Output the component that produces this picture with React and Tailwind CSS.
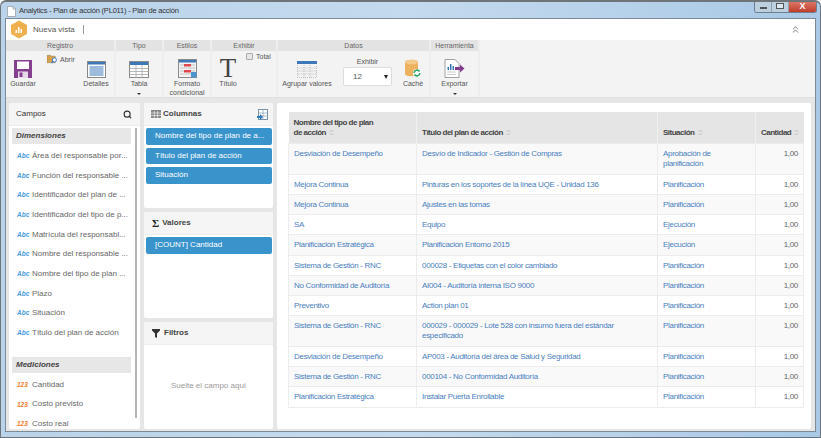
import { Search, ChevronsUp } from 'lucide-react'

const dimensiones = [
  'Área del responsable por...',
  'Función del responsable ...',
  'Identificador del plan de ...',
  'Identificador del tipo de p...',
  'Matrícula del responsabl...',
  'Nombre del responsable ...',
  'Nombre del tipo de plan ...',
  'Plazo',
  'Situación',
  'Título del plan de acción',
]

const mediciones = ['Cantidad', 'Costo previsto', 'Costo real']

const filas = [
  { tipo: 'Desviación de Desempeño', titulo: 'Desvío de Indicador - Gestión de Compras', situacion: 'Aprobación de planificación', h: 'h-[31px]' },
  { tipo: 'Mejora Continua', titulo: 'Pinturas en los soportes de la línea UQE - Unidad 136', situacion: 'Planificación', h: 'h-[20px]' },
  { tipo: 'Mejora Continua', titulo: 'Ajustes en las tomas', situacion: 'Planificación', h: 'h-[20px]' },
  { tipo: 'SA', titulo: 'Equipo', situacion: 'Ejecución', h: 'h-[20px]' },
  { tipo: 'Planificación Estratégica', titulo: 'Planificación Entorno 2015', situacion: 'Ejecución', h: 'h-[21px]' },
  { tipo: 'Sistema de Gestión - RNC', titulo: '000028 - Etiquetas con el color cambiado', situacion: 'Planificación', h: 'h-[20px]' },
  { tipo: 'No Conformidad de Auditoría', titulo: 'AI004 - Auditoría interna ISO 9000', situacion: 'Planificación', h: 'h-[20px]' },
  { tipo: 'Preventivo', titulo: 'Action plan 01', situacion: 'Planificación', h: 'h-[20px]' },
  { tipo: 'Sistema de Gestión - RNC', titulo: '000029 - 000029 - Lote 528 con insumo fuera del estándar especificado', situacion: 'Planificación', h: 'h-[31px]' },
  { tipo: 'Desviación de Desempeño', titulo: 'AP003 - Auditoría del área de Salud y Seguridad', situacion: 'Planificación', h: 'h-[20px]' },
  { tipo: 'Sistema de Gestión - RNC', titulo: '000104 - No Conformidad Auditoría', situacion: 'Planificación', h: 'h-[20px]' },
  { tipo: 'Planificación Estratégica', titulo: 'Instalar Puerta Enrollable', situacion: 'Planificación', h: 'h-[21px]' },
]

function SortIcon() {
  return (
    <svg width="5" height="7" viewBox="0 0 5 7" className="inline-block ml-[3px]">
      <path d="M0.5 3 L2.5 1 L4.5 3 M0.5 4 L2.5 6 L4.5 4" fill="none" stroke="#b5b5b5" strokeWidth="0.7" />
    </svg>
  )
}

function TableIcon() {
  return (
    <svg width="20" height="17" viewBox="0 0 20 17">
      <rect x="0.5" y="0.5" width="19" height="16" fill="#fff" stroke="#8a8a8a" />
      <rect x="1" y="1" width="18" height="3" fill="#3d78b8" />
      <path d="M1 7.5h18M1 10.5h18M1 13.5h18M7 4v13M13 4v13" stroke="#a8a8a8" strokeWidth="0.8" />
    </svg>
  )
}

function Grupo({ titulo, className, children }) {
  return (
    <div className={`flex flex-col shrink-0 border-r-2 border-[#ededed] ${className}`}>
      <div className="h-[11px] bg-[#e3e3e3] text-[7px] leading-[11px] text-[#666] text-center">{titulo}</div>
      <div className="flex-1 relative">{children}</div>
    </div>
  )
}

function Boton({ icono, children, className }) {
  return (
    <div className={`flex flex-col items-center text-[7px] leading-[9px] text-[#555] text-center ${className}`}>
      <div className="h-[19px] flex items-end justify-center">{icono}</div>
      <div className="mt-[1px]">{children}</div>
    </div>
  )
}

function Caret() {
  return <div className="absolute bottom-[2px] left-1/2 -translate-x-1/2 w-0 h-0 border-x-[2px] border-x-transparent border-t-[2px] border-t-[#333]" />
}

function Chip({ children }) {
  return (
    <div className="h-[16.5px] rounded-[2px] bg-[#3a94cc] text-white text-[8px] leading-[16px] pl-[9px] whitespace-nowrap overflow-hidden">
      {children}
    </div>
  )
}

function PanelHeader({ children, className }) {
  return <div className={`shrink-0 bg-[#f5f5f5] border-b border-[#ececec] flex items-center text-[8px] font-bold text-[#444] ${className}`}>{children}</div>
}

export default function App() {
  return (
    <div className="w-[821px] h-[438px] overflow-hidden flex flex-col rounded-t-[6px] border-t-2 border-x border-b border-[#6e7478] bg-gradient-to-r from-[#b9d3ea] via-[#c4daee] to-[#a9c9e6] font-['Liberation_Sans',sans-serif]">
      {/* barra de titulo */}
      <div className="h-[16px] shrink-0 flex pl-[5px] pr-[3px]">
        <div className="flex items-center text-[7.5px] tracking-[-0.2px] text-[#333] pl-[1px] pt-[2px]">
          <svg width="9" height="11" viewBox="0 0 9 11">
            <path d="M0.5 0.5h5.5l2.5 2.5v7.5h-8z" fill="#fff" stroke="#9aa0a6" strokeWidth="0.8" />
            <path d="M6 0.5v2.5h2.5" fill="none" stroke="#9aa0a6" strokeWidth="0.8" />
          </svg>
          <span className="ml-[3px]">Analytics - Plan de acción (PL011) - Plan de acción</span>
        </div>
        <div className="ml-auto flex h-[13px] -mt-[2px] rounded-b-[3px] border border-t-0 border-[#6e7f8e] overflow-hidden">
          <div className="w-[17px] bg-[#bdd0e0] flex items-center justify-center border-r border-[#8fa0ae]">
            <div className="w-[7px] h-[2px] bg-white border border-[#555] mt-[4px]" />
          </div>
          <div className="w-[17px] bg-[#bdd0e0] flex items-center justify-center border-r border-[#8fa0ae]">
            <div className="w-[8px] h-[6px] border border-[#555] bg-[#dde7ef]" />
          </div>
          <div className="w-[27px] bg-gradient-to-b from-[#dd8070] to-[#c23a2a] flex items-center justify-center text-white text-[9px] font-bold leading-none">
            X
          </div>
        </div>
      </div>

      {/* cuerpo de la ventana */}
      <div className="flex-1 min-h-0 mx-[4px] mb-[5px] border border-[#7b8a96] bg-[#e6e6e6] flex flex-col overflow-hidden">
        <div className="h-[21px] shrink-0 bg-white flex items-center pl-[4px] pr-[14px]">
          <svg width="18" height="19" viewBox="0 0 18 19">
            <path d="M9 0.5L17 5v9l-8 4.5L1 14V5z" fill="#efb04f" />
            <path d="M5.5 13V10h1.5v3zM8 13V7h1.5v6zM10.5 13V9H12v4z" fill="#fff" />
          </svg>
          <span className="ml-[5px] text-[8px] text-[#555]">Nueva vista</span>
          <div className="ml-[8px] w-px h-[9px] bg-[#999]" />
          <ChevronsUp size={11} strokeWidth={1.5} className="ml-auto text-[#444]" />
        </div>

        {/* cinta */}
        <div className="h-[58px] shrink-0 bg-[#f3f3f3] flex border-b border-[#e0e0e0]">
          <Grupo titulo="Registro" className="w-[110px]">
            <Boton className="absolute left-[3px] top-[8px] w-[28px]" icono={
              <svg width="18" height="18" viewBox="0 0 18 18">
                <path d="M0 0h18v18H0z" fill="#84408f" />
                <rect x="3" y="1.5" width="12" height="7.5" fill="#fff" />
                <rect x="4" y="11.5" width="10" height="6.5" fill="#e6d9e8" />
                <rect x="5.5" y="12.5" width="3" height="4.5" fill="#84408f" />
              </svg>
            }>Guardar</Boton>
            <div className="absolute left-[41px] top-[3px] flex items-center gap-[2px] text-[7px] text-[#555] leading-none">
              <svg width="11" height="10" viewBox="0 0 12 10">
                <path d="M0 1h4l1 1h4v7H0z" fill="#d8a24a" stroke="#8b7a5a" strokeWidth="0.5" />
                <circle cx="8" cy="6" r="2.3" fill="#fff" stroke="#2f78c0" />
                <path d="M6.5 7.5L5 9.5" stroke="#2f78c0" strokeWidth="1.2" />
              </svg>
              Abrir
            </div>
            <Boton className="absolute left-[76px] top-[8px] w-[28px]" icono={
              <svg width="19" height="17" viewBox="0 0 19 17">
                <rect x="0.5" y="0.5" width="18" height="16" fill="#fff" stroke="#888" />
                <rect x="1" y="1" width="17" height="2.5" fill="#3d78b8" />
                <rect x="2.5" y="5" width="14" height="10" fill="#9dbbdc" />
              </svg>
            }>Detalles</Boton>
          </Grupo>
          <Grupo titulo="Tipo" className="w-[48px]">
            <Boton className="pt-[8px]" icono={<TableIcon />}>Tabla</Boton>
            <Caret />
          </Grupo>
          <Grupo titulo="Estilos" className="w-[48px]">
            <Boton className="pt-[8px]" icono={
              <svg width="19" height="19" viewBox="0 0 19 19">
                <rect x="0.5" y="0.5" width="18" height="18" fill="#f4f4f4" stroke="#8a8a8a" />
                <rect x="1" y="1" width="17" height="2.5" fill="#3d78b8" />
                <path d="M2 6h15M2 9h15M2 12h15M2 15h15" stroke="#b8b8b8" strokeWidth="0.8" />
                <rect x="6" y="5" width="7" height="2.5" fill="#e0474c" />
                <rect x="6" y="11" width="7" height="2.5" fill="#e0474c" />
                <rect x="13" y="13" width="5.5" height="5.5" fill="#4d94d0" />
              </svg>
            }>Formato<br />condicional</Boton>
          </Grupo>
          <Grupo titulo="Exhibir" className="w-[66px]">
            <div className="absolute left-[-5px] top-[8px] w-[42px] flex flex-col items-center text-[7px] leading-[9px] text-[#555]">
              <span className="h-[19px] text-[27px] leading-[19px] text-[#444] font-['Liberation_Serif',serif]">T</span>
              <span className="mt-[1px]">Título</span>
            </div>
            <div className="absolute left-[34px] top-[2px] flex items-center gap-[3px] text-[7px] text-[#555] leading-none">
              <div className="w-[7px] h-[7px] rounded-[1px] border border-[#aaa] bg-[#e8e8e8]" />
              Total
            </div>
          </Grupo>
          <Grupo titulo="Datos" className="w-[153px]">
            <Boton className="absolute left-[1px] top-[8px] w-[56px] whitespace-nowrap" icono={
              <svg width="20" height="17" viewBox="0 0 20 17">
                <rect x="0" y="0" width="20" height="3" fill="#3d78b8" />
                <path d="M0.5 4v12.5h19V4M0.5 7h19M0.5 10h19M0.5 13h19M7 4v13M13 4v13" fill="none" stroke="#aaa" strokeWidth="0.7" strokeDasharray="1 1" />
              </svg>
            }>Agrupar valores</Boton>
            <div className="absolute left-[65px] top-[6px] w-[49px] text-center text-[7px] leading-[10px] text-[#555]">
              Exhibir
              <div className="h-[19px] rounded-[2px] border border-[#ddd] bg-white flex items-center justify-between pl-[9px] pr-[3px] text-[8px] text-[#555]">
                12
                <div className="w-0 h-0 border-x-[2.5px] border-x-transparent border-t-[4px] border-t-[#222]" />
              </div>
            </div>
            <Boton className="absolute left-[123px] top-[8px] w-[24px]" icono={
              <svg width="18" height="19" viewBox="0 0 18 19">
                <path d="M1 3c0-3 13-3 13 0v12c0 3-13 3-13 0z" fill="#edb260" />
                <ellipse cx="7.5" cy="3" rx="6.5" ry="2.3" fill="#f4ca8c" />
                <circle cx="13" cy="14" r="4" fill="#fff" />
                <path d="M10 14a3 3 0 0 1 5.5-1.5M16 14a3 3 0 0 1-5.5 1.5" fill="none" stroke="#2aa36b" strokeWidth="1.5" />
              </svg>
            }>Caché</Boton>
          </Grupo>
          <Grupo titulo="Herramienta" className="w-[49px]">
            <Boton className="pt-[8px]" icono={
              <svg width="21" height="19" viewBox="0 0 21 19">
                <path d="M1 0.5h10l4 4v14H1z" fill="#fff" stroke="#8a8a8a" strokeWidth="0.8" />
                <path d="M3.5 11V8H5v3zM6 11V5h1.5v6zM8.5 11V7H10v4z" fill="#3d78b8" />
                <path d="M3 13h9M3 15.5h9" stroke="#bbb" strokeWidth="0.8" />
                <path d="M11 8h5V5.5l4.5 4-4.5 4V11h-5z" fill="#84408f" />
              </svg>
            }>Exportar</Boton>
            <Caret />
          </Grupo>
        </div>

        {/* paneles */}
        <div className="flex-1 min-h-0 flex gap-[4px] pl-[3px] pr-[4px] pt-[5px] pb-[2px]">
          <div className="w-[131px] shrink-0 bg-white rounded-[2px] flex flex-col overflow-hidden relative">
            <PanelHeader className="h-[23px] pl-[7px] pr-[8px] justify-between">
              <span className="font-normal text-[#333]">Campos</span>
              <Search size={9} strokeWidth={3} className="text-[#333]" />
            </PanelHeader>
            <div className="pl-[3px] pr-[9px] pt-[2px] min-h-0 overflow-hidden">
              <div className="h-[16px] bg-[#e7e7e7] pl-[4px] text-[8px] leading-[16px] font-bold italic text-[#444]">Dimensiones</div>
              <div className="h-[2px]" />
              {dimensiones.map((d) => (
                <div key={d} className="h-[19.7px] flex items-center whitespace-nowrap text-[8px] text-[#666] pl-[5px]">
                  <span className="w-[15px] shrink-0 text-[6.5px] font-bold italic text-[#4a9be0]">Abc</span>
                  {d}
                </div>
              ))}
              <div className="h-[14px]" />
              <div className="h-[16px] bg-[#e7e7e7] pl-[4px] text-[8px] leading-[16px] font-bold italic text-[#444]">Mediciones</div>
              <div className="h-[2px]" />
              {mediciones.map((m) => (
                <div key={m} className="h-[19.7px] flex items-center whitespace-nowrap text-[8px] text-[#666] pl-[5px]">
                  <span className="w-[15px] shrink-0 text-[6.5px] font-bold italic text-[#f07a2a]">123</span>
                  {m}
                </div>
              ))}
            </div>
            <div className="absolute right-[3px] top-[25px] bottom-[11px] w-[2px] bg-[#b5b5b5]" />
          </div>

          <div className="w-[129px] shrink-0 flex flex-col gap-[4px]">
            <div className="h-[105px] bg-white rounded-[2px] overflow-hidden">
              <PanelHeader className="h-[23px] pl-[7px] pr-[5px] mb-[2px]">
                <svg width="10" height="8" viewBox="0 0 10 8" className="mr-[2px]">
                  <rect x="0" y="0" width="10" height="8" fill="#888" />
                  <path d="M0 3h10M0 5.5h10M3.3 1v7M6.6 1v7" stroke="#fff" strokeWidth="0.6" />
                </svg>
                Columnas
                <svg width="11" height="11" viewBox="0 0 11 11" className="ml-auto">
                  <rect x="1.5" y="0.5" width="9" height="10" fill="#fff" stroke="#7a94ad" />
                  <path d="M6 1v9M1.5 4h9M1.5 7h9" stroke="#7a94ad" strokeWidth="0.6" />
                  <path d="M0 7h3V5l3 3-3 3V9H0z" fill="#2f78c0" />
                </svg>
              </PanelHeader>
              <div className="flex flex-col gap-[3px] pl-[2px] pr-[1px]">
                <Chip>Nombre del tipo de plan de a...</Chip>
                <Chip>Título del plan de acción</Chip>
                <Chip>Situación</Chip>
              </div>
            </div>
            <div className="h-[106px] bg-white rounded-[2px] overflow-hidden">
              <PanelHeader className="h-[23px] pl-[8px] mb-[2px]">
                <span className="mr-[3px] text-[11px] text-[#222] font-['Liberation_Serif',serif]">Σ</span>
                Valores
              </PanelHeader>
              <div className="pl-[2px] pr-[1px]">
                <Chip>[COUNT] Cantidad</Chip>
              </div>
            </div>
            <div className="flex-1 bg-white rounded-[2px] flex flex-col overflow-hidden">
              <PanelHeader className="h-[23px] pl-[8px]">
                <svg width="8" height="9" viewBox="0 0 8 9" className="mr-[4px]">
                  <path d="M0 0h8v1.5L5 4.5V9L3 8V4.5L0 1.5z" fill="#333" />
                </svg>
                Filtros
              </PanelHeader>
              <div className="flex-1 flex items-center justify-center text-[8px] text-[#999] pb-[3px]">Suelte el campo aquí</div>
            </div>
          </div>

          <div className="flex-1 min-w-0 bg-white rounded-[2px] pl-[11px] pt-[9px]">
            <table className="w-[515px] table-fixed border-collapse text-[8px] leading-[10px]">
              <colgroup>
                <col className="w-[128px]" />
                <col className="w-[241px]" />
                <col className="w-[98px]" />
                <col className="w-[48px]" />
              </colgroup>
              <thead>
                <tr className="h-[31px] bg-[#e5e5e5] text-[#444] font-bold text-left tracking-[-0.5px]">
                  <th className="px-[5px] pb-[5px] align-bottom font-bold">Nombre del tipo de plan<br />de acción<SortIcon /></th>
                  <th className="px-[5px] pb-[5px] align-bottom font-bold border-l border-[#f0f0f0]">Título del plan de acción<SortIcon /></th>
                  <th className="px-[5px] pb-[5px] align-bottom font-bold border-l border-[#f0f0f0]">Situación<SortIcon /></th>
                  <th className="px-[5px] pb-[5px] align-bottom font-bold border-l border-[#f0f0f0] whitespace-nowrap">Cantidad<SortIcon /></th>
                </tr>
              </thead>
              <tbody className="text-[#4a80c0] tracking-[-0.3px]">
                {filas.map((f, i) => (
                  <tr key={i} className={`${f.h} ${i % 2 === 0 ? 'bg-[#f9f9f9]' : 'bg-white'}`}>
                    <td className="border border-[#ececec] px-[5px] pt-[5px] align-top">{f.tipo}</td>
                    <td className="border border-[#ececec] px-[5px] pt-[5px] align-top">{f.titulo}</td>
                    <td className="border border-[#ececec] px-[5px] pt-[5px] align-top">{f.situacion}</td>
                    <td className="border border-[#ececec] px-[5px] pt-[5px] align-top text-right text-[#666]">1,00</td>
                  </tr>
                ))}
              </tbody>
            </table>
          </div>
        </div>
      </div>
    </div>
  )
}
